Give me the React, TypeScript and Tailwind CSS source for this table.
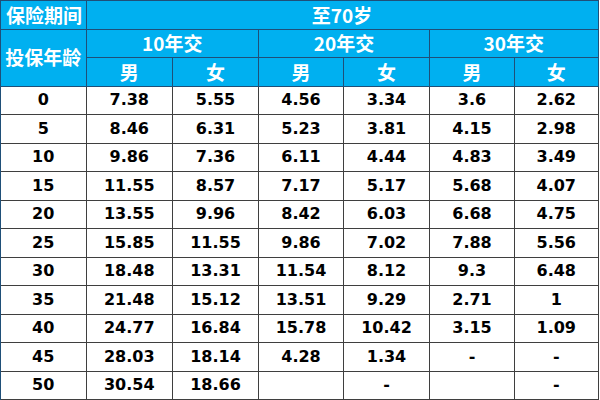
const cn = '"Noto Sans CJK SC", "Noto Sans", sans-serif';
const num = '"DejaVu Sans", "Liberation Sans", sans-serif';

const rows: [string, string, string, string, string, string, string][] = [
  ["0", "7.38", "5.55", "4.56", "3.34", "3.6", "2.62"],
  ["5", "8.46", "6.31", "5.23", "3.81", "4.15", "2.98"],
  ["10", "9.86", "7.36", "6.11", "4.44", "4.83", "3.49"],
  ["15", "11.55", "8.57", "7.17", "5.17", "5.68", "4.07"],
  ["20", "13.55", "9.96", "8.42", "6.03", "6.68", "4.75"],
  ["25", "15.85", "11.55", "9.86", "7.02", "7.88", "5.56"],
  ["30", "18.48", "13.31", "11.54", "8.12", "9.3", "6.48"],
  ["35", "21.48", "15.12", "13.51", "9.29", "2.71", "1"],
  ["40", "24.77", "16.84", "15.78", "10.42", "3.15", "1.09"],
  ["45", "28.03", "18.14", "4.28", "1.34", "-", "-"],
  ["50", "30.54", "18.66", "", "-", "", "-"],
];

const head =
  "flex items-center justify-center bg-[#00b0f0] text-white font-bold text-[19px] border-r border-b border-[#1f4f78]";
const cell =
  "flex items-center justify-center bg-white text-black font-bold text-[16px] border-r border-b border-[#3f3f3f]";

function App() {
  return (
    <div className="w-[600px] h-[400px] bg-white overflow-hidden">
      <div
        className="grid w-[598.5px] grid-cols-[85.5px_86.5px_86px_85px_86px_85px_83.5px] auto-rows-[28.5px] border-l border-t border-[#1f4f78]"
        style={{ fontFamily: cn }}
      >
        {/* header */}
        <div className={`${head} justify-start pl-[5px]`}>保险期间</div>
        <div className={`${head} col-span-6`}>至70岁</div>

        <div className={`${head} row-span-2`}>投保年龄</div>
        <div className={`${head} col-span-2`}>10年交</div>
        <div className={`${head} col-span-2`}>20年交</div>
        <div className={`${head} col-span-2`}>30年交</div>
        {["男", "女", "男", "女", "男", "女"].map((g, i) => (
          <div key={i} className={head}>
            {g}
          </div>
        ))}

        {/* data */}
        {rows.map((r) =>
          r.map((v, j) => (
            <div key={r[0] + "-" + j} className={cell} style={{ fontFamily: num }}>
              {v}
            </div>
          ))
        )}
      </div>
    </div>
  );
}

export default App;
